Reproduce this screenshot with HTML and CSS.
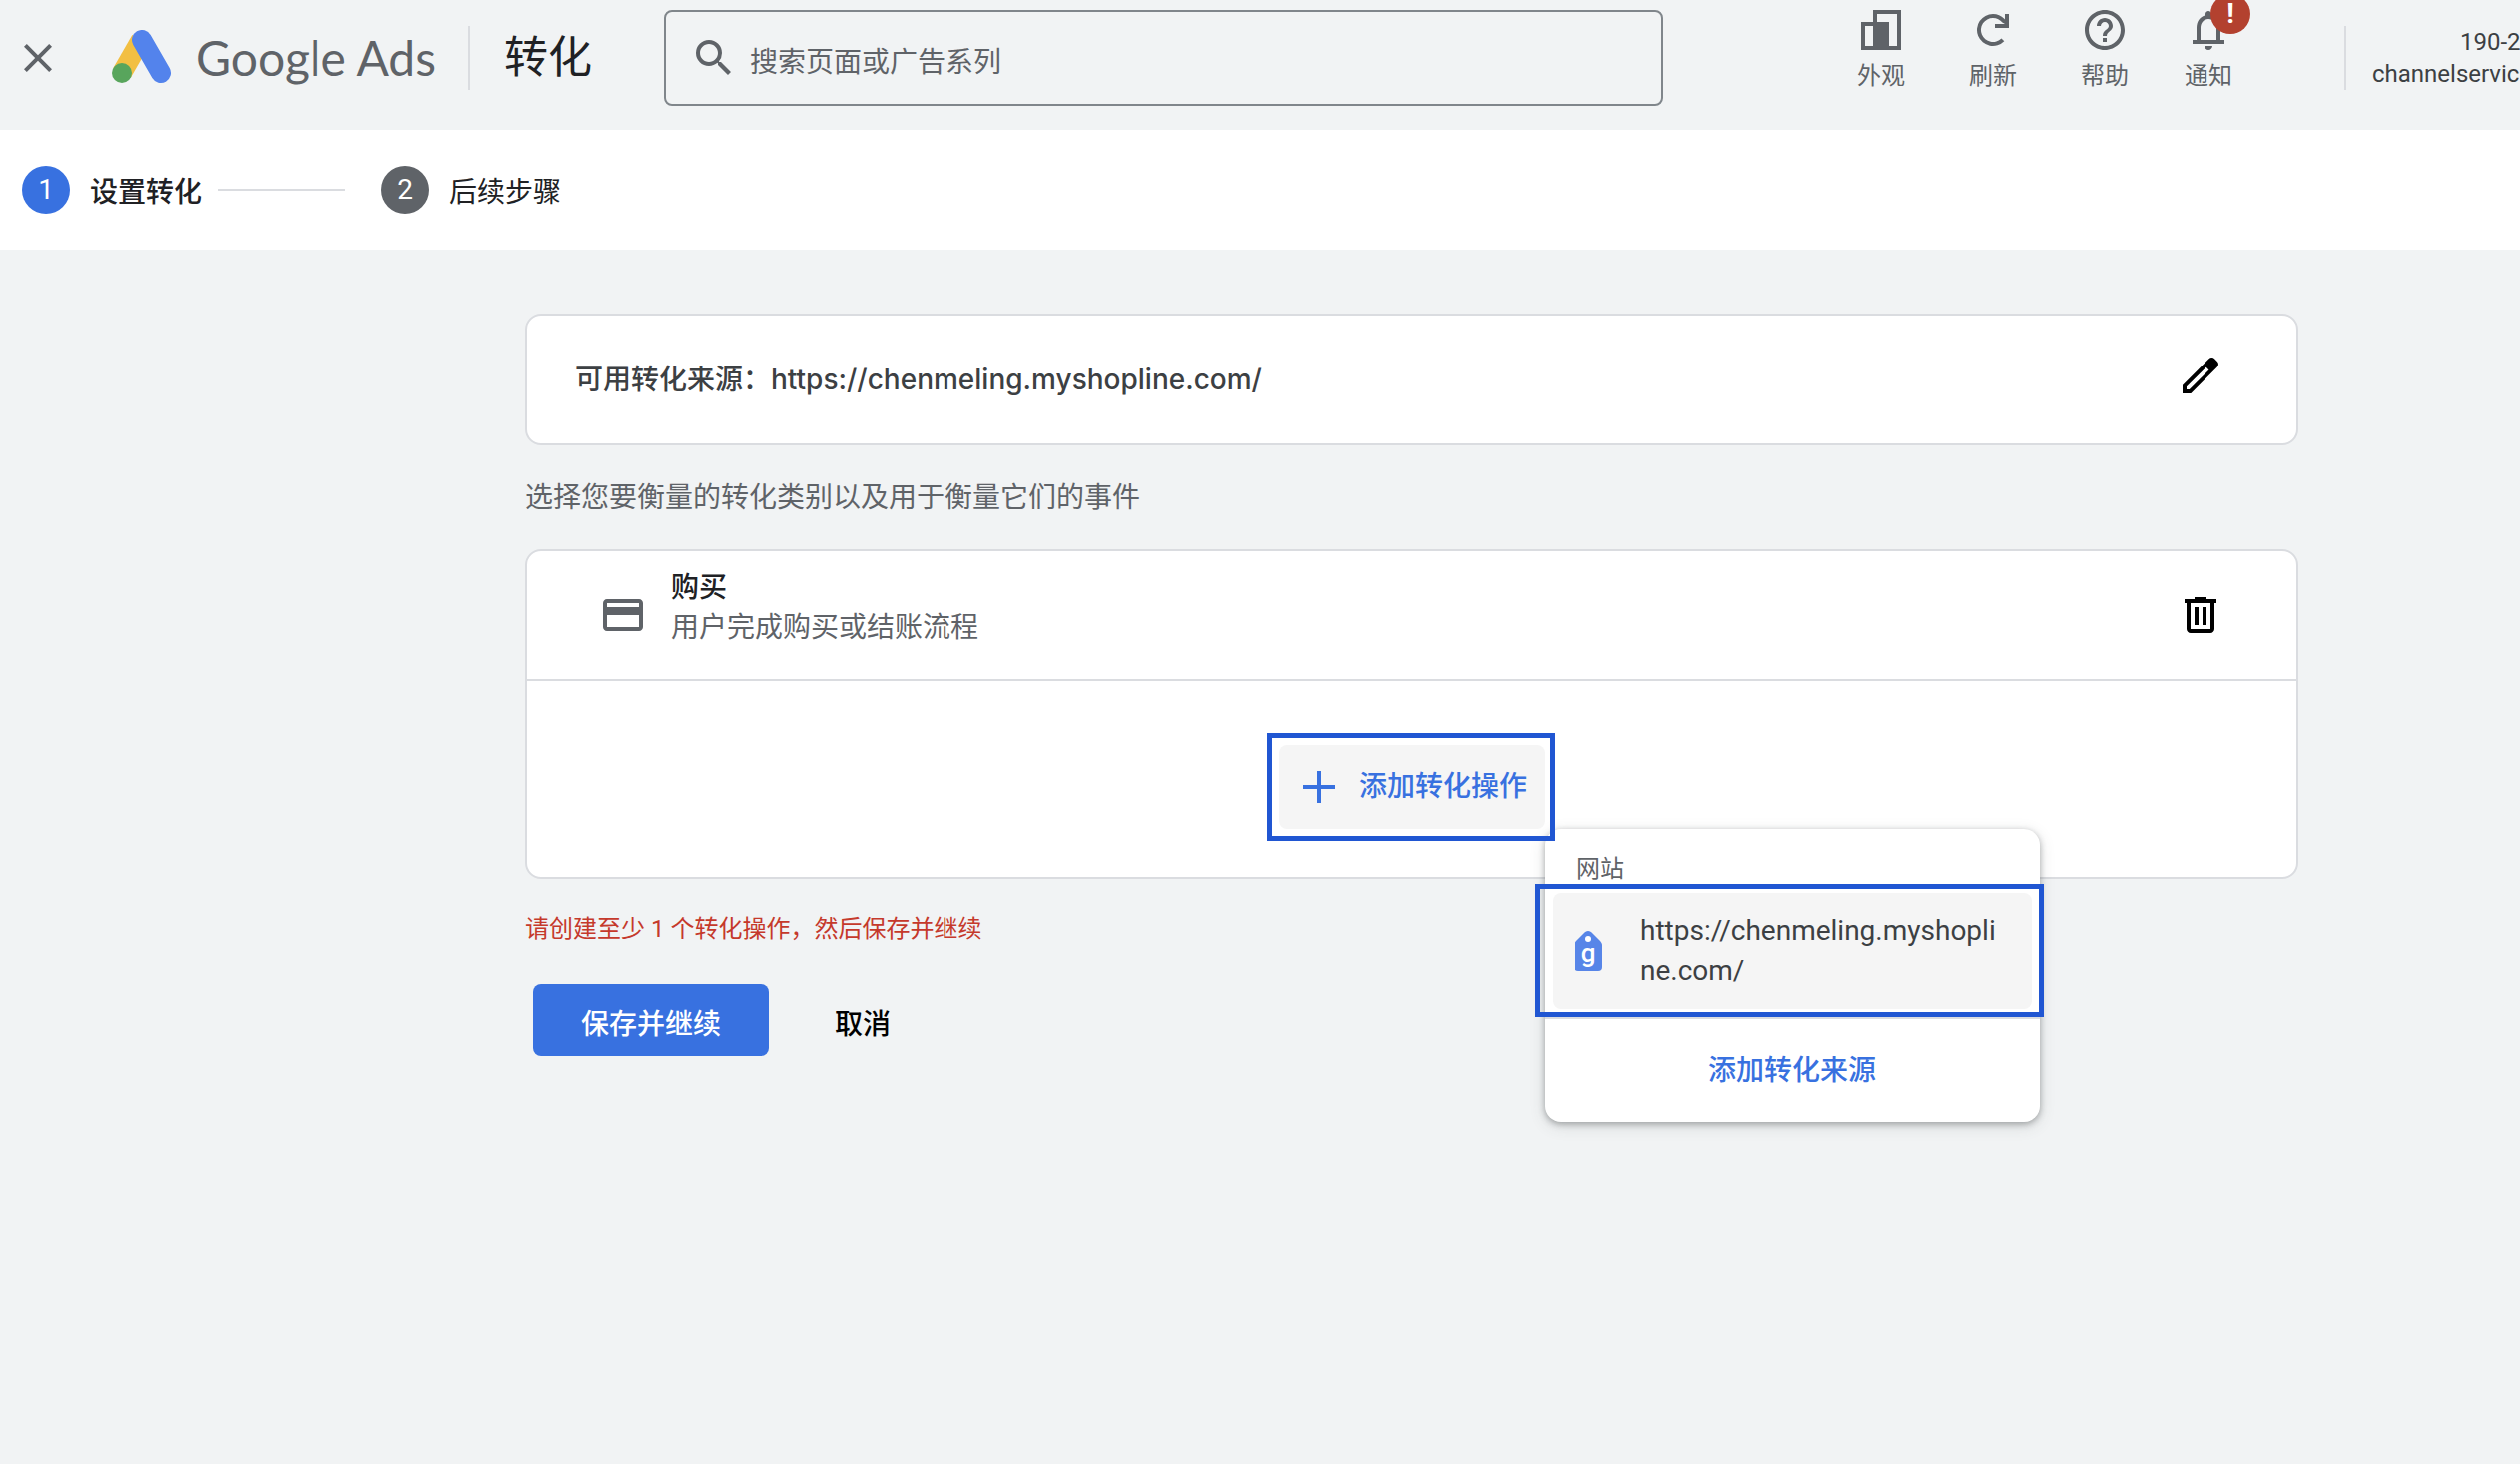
FILE: index.html
```html
<!DOCTYPE html>
<html lang="zh-CN">
<head>
    <meta charset="utf-8">
    <title>转化 - Google Ads</title>
    <link rel="stylesheet" href="styles.css">
</head>
<body>

<header class="topbar">
    <button type="button" class="icon-button close-button" aria-label="关闭">
        <svg class="icon" viewBox="0 0 24 24"><path d="M19 6.41L17.59 5 12 10.59 6.41 5 5 6.41 10.59 12 5 17.59 6.41 19 12 13.41 17.59 19 19 17.59 13.41 12z"/></svg>
    </button>
    <a href="#" class="brand">
        <svg class="brand-logo" viewBox="0 0 60 56">
            <path d="M29 10L10 43" stroke="#f2bf42" stroke-width="20"/>
            <circle cx="10" cy="43" r="10" fill="#58a55c"/>
            <path d="M30 10L49 43" stroke="#5383ec" stroke-width="20" stroke-linecap="round"/>
        </svg>
        <span class="brand-name">Google Ads</span>
    </a>
    <h1 class="page-title">转化</h1>
    <form class="search">
        <svg class="icon" viewBox="0 0 24 24"><path d="M15.5 14h-.79l-.28-.27A6.471 6.471 0 0 0 16 9.5 6.5 6.5 0 1 0 9.5 16c1.61 0 3.09-.59 4.23-1.57l.27.28v.79l5 4.99L20.49 19l-4.99-5zm-6 0C7.01 14 5 11.99 5 9.5S7.01 5 9.5 5 14 7.01 14 9.5 11.99 14 9.5 14z"/></svg>
        <input type="search" class="search-input" placeholder="搜索页面或广告系列" aria-label="搜索页面或广告系列">
    </form>
    <nav class="tools">
        <button type="button" class="tool">
            <svg class="icon" viewBox="0 0 24 24"><path fill-rule="evenodd" d="M8 2h14v20H2V8h6zM16 8v12h4V4H10v4zM4 10v10h4V10z"/></svg>
            外观
        </button>
        <button type="button" class="tool">
            <svg class="icon" viewBox="0 0 24 24"><path d="M17.65 6.35A7.958 7.958 0 0 0 12 4a8 8 0 1 0 5.65 13.65l-1.42-1.42A6 6 0 1 1 12 6c1.9 0 3.6.9 4.7 2.3L18 9H13v2h7V4h-2v2.7z"/></svg>
            刷新
        </button>
        <button type="button" class="tool">
            <svg class="icon" viewBox="0 0 24 24"><path d="M11 18h2v-2h-2v2zm1-16C6.48 2 2 6.48 2 12s4.48 10 10 10 10-4.48 10-10S17.52 2 12 2zm0 18c-4.41 0-8-3.59-8-8s3.59-8 8-8 8 3.59 8 8-3.59 8-8 8zm0-14c-2.21 0-4 1.79-4 4h2c0-1.1.9-2 2-2s2 .9 2 2c0 2-3 1.75-3 5h2c0-2.25 3-2.5 3-5 0-2.21-1.79-4-4-4z"/></svg>
            帮助
        </button>
        <button type="button" class="tool tool-notice">
            <svg class="icon" viewBox="0 0 24 24"><path d="M12 22c1.1 0 2-.9 2-2h-4c0 1.1.9 2 2 2zM18 17v-6c0-3.07-1.63-5.64-4.5-6.32V4c0-.83-.67-1.5-1.5-1.5s-1.5.67-1.5 1.5v.68C7.64 5.36 6 7.92 6 11v6H4v2h16v-2h-2zm-2 0H8v-6c0-2.48 1.51-4.5 4-4.5s4 2.02 4 4.5v6z"/></svg>
            通知
            <span class="badge">!</span>
        </button>
    </nav>
    <div class="account">
        <div class="account-id">190-2</div>
        <div>channelservice</div>
    </div>
</header>

<ol class="steps">
    <li class="step step-active">
        <span class="step-number">1</span>
        <span class="step-label">设置转化</span>
    </li>
    <li class="step">
        <span class="step-number">2</span>
        <span class="step-label">后续步骤</span>
    </li>
</ol>

<main class="content">
    <section class="card source">
        <h2 class="source-title">可用转化来源：https://chenmeling.myshopline.com/</h2>
        <button type="button" class="icon-button" aria-label="修改">
            <svg class="icon" viewBox="0 0 24 24"><path d="M20.41 4.94l-1.35-1.35c-.78-.78-2.05-.78-2.83 0L3 16.82V21h4.18L20.41 7.77c.79-.78.79-2.05 0-2.83zm-14 14.12L5 19v-1.36l9.82-9.82 1.41 1.41-9.82 9.83z"/></svg>
        </button>
    </section>

    <p class="hint">选择您要衡量的转化类别以及用于衡量它们的事件</p>

    <section class="card">
        <div class="goal">
            <svg class="icon goal-icon" viewBox="0 0 24 24"><path d="M20 4H4c-1.11 0-1.99.89-1.99 2L2 18c0 1.11.89 2 2 2h16c1.11 0 2-.89 2-2V6c0-1.11-.89-2-2-2zm0 14H4v-6h16v6zm0-10H4V6h16v2z"/></svg>
            <div class="goal-text">
                <h3 class="goal-name">购买</h3>
                <p class="goal-desc">用户完成购买或结账流程</p>
            </div>
            <button type="button" class="icon-button" aria-label="移除">
                <svg class="icon" viewBox="0 0 24 24"><path d="M15 4V3H9v1H4v2h1v13c0 1.1.9 2 2 2h10c1.1 0 2-.9 2-2V6h1V4h-5zm2 15H7V6h10v13zM9 8h2v9H9zm4 0h2v9h-2z"/></svg>
            </button>
        </div>
        <div class="goal-actions">
            <div class="add-wrap">
                <button type="button" class="add-button highlight">
                    <svg class="icon" viewBox="0 0 24 24"><path d="M20 13h-7v7h-2v-7H4v-2h7V4h2v7h7v2z"/></svg>
                    添加转化操作
                </button>
                <div class="menu">
                    <div class="menu-label">网站</div>
                    <button type="button" class="menu-item highlight">
                        <svg class="tag-icon" viewBox="0 0 28 40">
                            <path fill="#5785e8" d="M14 0c2 0 3 1 4 2l8 8c1 1 2 3 2 4v22a4 4 0 0 1-4 4H4a4 4 0 0 1-4-4V14c0-1 1-3 2-4l8-8c1-1 2-2 4-2z"/>
                            <circle cx="14" cy="8" r="3" fill="#fff"/>
                            <text class="tag-letter" x="14" y="31" text-anchor="middle">g</text>
                        </svg>
                        <span class="menu-url">https://chenmeling.myshopline.com/</span>
                    </button>
                    <button type="button" class="menu-add">添加转化来源</button>
                </div>
            </div>
        </div>
    </section>

    <p class="error-message">请创建至少 1 个转化操作，然后保存并继续</p>

    <div class="form-actions">
        <button type="button" class="save-button">保存并继续</button>
        <button type="button" class="cancel-button">取消</button>
    </div>
</main>

</body>
</html>
```

FILE: styles.css
```css
* {
    box-sizing: border-box;
}

body {
    min-height: 100vh;
    margin: 0;
    background-color: #f1f3f4;
    color: #3c4043;
    font-family: Roboto, "Noto Sans CJK SC", sans-serif;
    font-size: 28px;
    line-height: 40px;
}

h1, h2, h3, p, ol {
    margin: 0;
    padding: 0;
    font-size: 28px;
    font-weight: 500;
}

p {
    font-weight: 400;
}

button {
    padding: 0;
    border: none;
    background: none;
    color: inherit;
    font: inherit;
    cursor: pointer;
}

.icon {
    display: block;
    flex: none;
    width: 48px;
    height: 48px;
    fill: currentColor;
}

.icon-button {
    flex: none;
    color: #000;
}

/* Top bar */
.topbar {
    display: flex;
    align-items: flex-start;
    height: 130px;
    overflow: hidden;
}

.close-button {
    margin: 34px 50px 0 14px;
    color: #5f6368;
}

.brand {
    display: flex;
    flex: none;
    align-items: center;
    gap: 24px;
    height: 64px;
    margin-top: 26px;
    padding-right: 32px;
    border-right: 2px solid #dadce0;
    color: #5f6368;
    text-decoration: none;
}

.brand-logo {
    width: 60px;
    height: 56px;
    fill: none;
}

.brand-name {
    font-family: Lato, sans-serif;
    font-size: 48px;
    line-height: 64px;
}

.page-title {
    flex: none;
    margin: 26px 72px 0 34px;
    color: #202124;
    font-size: 44px;
    font-weight: 400;
    line-height: 64px;
}

.search {
    display: flex;
    flex: 1;
    align-items: center;
    gap: 12px;
    height: 96px;
    margin-top: 10px;
    padding: 0 24px;
    border: 2px solid #80868b;
    border-radius: 8px;
    color: #5f6368;
}

.search-input {
    flex: 1;
    padding: 10px 0 0;
    border: none;
    outline: none;
    background: none;
    color: #202124;
    font: inherit;
}

.search-input::placeholder {
    color: #5f6368;
    opacity: 1;
}

.tools {
    display: flex;
    flex: none;
    gap: 64px;
    margin: 6px 112px 0 194px;
}

.tool {
    position: relative;
    display: flex;
    flex-direction: column;
    align-items: center;
    gap: 6px;
    width: 48px;
    color: #5f6368;
    font-size: 24px;
    line-height: 32px;
    white-space: nowrap;
}

.tool-notice {
    margin-left: -8px;
}

.badge {
    position: absolute;
    top: -12px;
    left: 26px;
    display: flex;
    align-items: center;
    justify-content: center;
    width: 40px;
    height: 40px;
    border-radius: 50%;
    background-color: #b3412f;
    color: #fff;
    font-size: 28px;
    font-weight: 700;
    line-height: 28px;
}

.account {
    flex: none;
    width: 176px;
    height: 64px;
    margin-top: 26px;
    padding-left: 26px;
    border-left: 2px solid #dadce0;
    font-size: 24px;
    line-height: 32px;
    white-space: nowrap;
}

.account-id {
    padding-left: 88px;
}

/* Steps */
.steps {
    display: flex;
    align-items: center;
    height: 120px;
    padding: 0 22px;
    background-color: #fff;
    color: #202124;
    list-style: none;
}

.step {
    display: flex;
    align-items: center;
    font-weight: 400;
}

.step-active {
    font-weight: 500;
}

.step-active::after {
    content: "";
    width: 128px;
    height: 2px;
    margin: 0 36px 0 16px;
    background-color: #dadce0;
}

.step-number {
    width: 48px;
    height: 48px;
    margin-right: 20px;
    border-radius: 50%;
    background-color: #5f6368;
    color: #fff;
    font-size: 28px;
    font-weight: 400;
    line-height: 48px;
    text-align: center;
}

.step-active .step-number {
    background-color: #3871e0;
}

.step-label {
    padding-top: 6px;
}

/* Content */
.content {
    padding: 64px 222px 64px 526px;
}

.card {
    border: 2px solid #dadce0;
    border-radius: 16px;
    background-color: #fff;
}

.source {
    display: flex;
    justify-content: space-between;
    padding: 36px 72px 44px 48px;
}

.source-title {
    padding-top: 8px;
    font-family: Inter, "Noto Sans CJK SC", sans-serif;
    line-height: 40px;
}

.hint {
    padding: 33px 0 31px;
    color: #5f6368;
}

.goal {
    display: flex;
    align-items: center;
    height: 130px;
    padding: 0 72px;
    border-bottom: 2px solid #dadce0;
}

.goal-icon {
    color: #5f6368;
}

.goal-text {
    flex: 1;
    padding: 0 24px 14px;
}

.goal-name {
    color: #202124;
}

.goal-desc {
    color: #5f6368;
}

.goal-actions {
    display: flex;
    justify-content: center;
    padding: 64px 0 48px;
}

.add-wrap {
    position: relative;
}

.add-button {
    position: relative;
    z-index: 2;
    display: flex;
    align-items: center;
    gap: 16px;
    height: 84px;
    padding: 0 18px 0 16px;
    border-radius: 8px;
    background-color: #f5f5f5;
    color: #3871e0;
    font-weight: 500;
}

.highlight::after {
    content: "";
    position: absolute;
    inset: -12px -10px -12px -12px;
    border: 5px solid #2056d2;
}

.menu {
    position: absolute;
    top: 100%;
    left: 100%;
    width: 496px;
    border-radius: 16px;
    background-color: #fff;
    box-shadow: 0 2px 6px rgba(60, 64, 67, 0.4), 0 4px 16px rgba(60, 64, 67, 0.15);
}

.menu-label {
    padding: 24px 32px 0;
    color: #5f6368;
    font-size: 24px;
    line-height: 32px;
}

.menu-item {
    position: relative;
    display: flex;
    align-items: center;
    gap: 38px;
    width: 480px;
    margin: 8px;
    padding: 18px 22px;
    border-radius: 8px;
    background-color: #f5f5f5;
    text-align: left;
}

.menu-item::after {
    inset: -9px -12px -8px -18px;
}

.tag-icon {
    flex: none;
    width: 28px;
    height: 40px;
}

.tag-letter {
    fill: #fff;
    font-size: 26px;
    font-weight: 500;
}

.menu-url {
    word-break: break-all;
}

.menu-add {
    display: block;
    width: 100%;
    padding: 32px 0;
    border-top: 2px solid #dadce0;
    color: #3871e0;
    font-weight: 500;
}

.error-message {
    padding: 32px 0;
    color: #c5392b;
    font-size: 24px;
    line-height: 36px;
}

.form-actions {
    display: flex;
    gap: 66px;
    padding: 5px 8px;
}

.save-button {
    height: 72px;
    padding: 10px 48px 0;
    border-radius: 8px;
    background-color: #3871e0;
    color: #fff;
    font-weight: 500;
}

.cancel-button {
    padding-top: 10px;
    color: #000;
    font-weight: 500;
}
```
